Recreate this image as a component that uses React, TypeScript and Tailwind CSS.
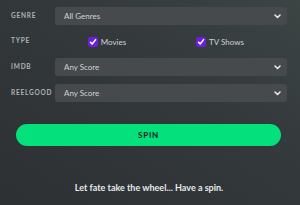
import React from "react";

function Chevron() {
  return (
    <svg width="7" height="5" viewBox="0 0 7 5" className="shrink-0">
      <path d="M1 1 L3.5 3.5 L6 1" fill="none" stroke="#e4e6e7" strokeWidth="1.6" strokeLinecap="round" strokeLinejoin="round" />
    </svg>
  );
}

function Select({ value }: { value: string }) {
  return (
    <div className="flex-1 h-[18px] bg-[#464a4c] rounded-[3px] flex items-center justify-between pl-[9px] pr-[6px]">
      <span className="text-[8px] text-[#cfd2d3] leading-none">{value}</span>
      <Chevron />
    </div>
  );
}

function Label({ children }: { children: React.ReactNode }) {
  return (
    <div className="w-[44px] text-[6.5px] font-bold tracking-[0.12em] text-[#aeb2b5] leading-none uppercase">
      {children}
    </div>
  );
}

function Check({ label }: { label: string }) {
  return (
    <div className="flex items-center gap-[3px]">
      <div className="w-[10px] h-[10px] rounded-[2px] bg-[#6c1fd8] flex items-center justify-center">
        <svg width="8" height="8" viewBox="0 0 8 8">
          <path d="M1.5 4.2 L3.2 6 L6.6 1.6" fill="none" stroke="#ffffff" strokeWidth="1.5" strokeLinecap="round" strokeLinejoin="round" />
        </svg>
      </div>
      <span className="text-[8px] text-[#cfd2d3] leading-none">{label}</span>
    </div>
  );
}

export default function App() {
  return (
    <div
      className="w-[300px] h-[205px] overflow-hidden bg-linear-to-bl from-[#3c4444] via-[#32373a] to-[#2e3134] pt-[7px] pl-[11px] pr-[13px]"
      style={{ fontFamily: "Lato, 'Noto Sans', sans-serif" }}
    >
      <div className="flex items-center">
        <Label>Genre</Label>
        <Select value="All Genres" />
      </div>
      <div className="flex items-center h-[33px]">
        <Label>Type</Label>
        <div className="flex-1 grid grid-cols-2">
          <div className="flex justify-center pr-[12px]"><Check label="Movies" /></div>
          <div className="flex justify-center pr-[18px]"><Check label="TV Shows" /></div>
        </div>
      </div>
      <div className="flex items-center">
        <Label>IMDB</Label>
        <Select value="Any Score" />
      </div>
      <div className="flex items-center mt-[8px]">
        <Label>Reelgood</Label>
        <Select value="Any Score" />
      </div>
      <div className="mt-[22px] ml-[5px] mr-[6px] h-[22px] rounded-full bg-[#03e07c] flex items-center justify-center">
        <span className="text-[8px] font-bold tracking-[0.1em] text-[#10231a] leading-none">SPIN</span>
      </div>
      <div className="mt-[36px] text-center text-[9px] font-bold text-[#e8eaeb] leading-[12px]">
        Let fate take the wheel... Have a spin.
      </div>
    </div>
  );
}
